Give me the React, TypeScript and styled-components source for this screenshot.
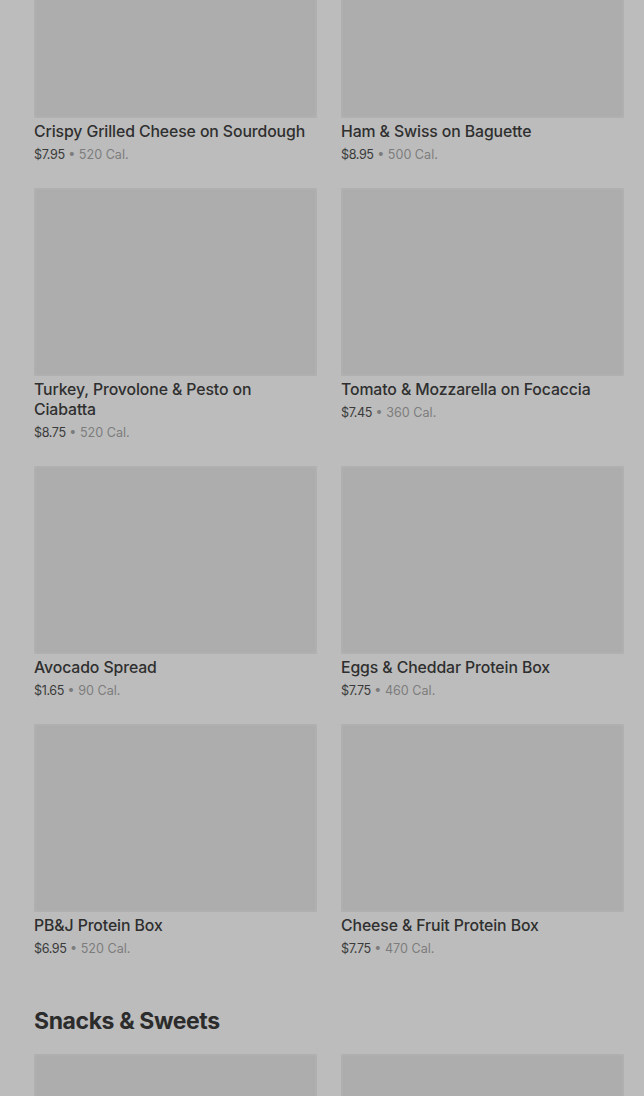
import React from 'react';
import styled, { createGlobalStyle } from 'styled-components';

const GlobalStyle = createGlobalStyle`
  html, body {
    margin: 0;
    padding: 0;
    background: #bcbcbc;
    font-family: Inter, "Noto Sans", "Liberation Sans", sans-serif;
    overflow: hidden;
  }
`;

const Page = styled.div`
  width: 644px;
  height: 1096px;
  overflow: hidden;
  background: #bcbcbc;
`;

const Content = styled.div`
  margin-top: -70px;
  padding: 0 20px 0 34px;
`;

const Section = styled.section`
  display: flex;
  flex-direction: column;
`;

const SectionTitle = styled.h2`
  margin: 0;
  padding: 15px 0 9px 0;
  font-size: 23px;
  line-height: 48px;
  font-weight: 700;
  letter-spacing: -0.4px;
  color: #2c2c2c;
`;

const Grid = styled.div`
  display: grid;
  grid-template-columns: 283px 283px;
  column-gap: 24px;
`;

const Card = styled.div`
  display: flex;
  flex-direction: column;
  padding-bottom: 23px;
`;

const Thumb = styled.div`
  height: 188px;
  background: #adadad;
  box-shadow: inset 0 0 3px 1px rgba(190, 190, 190, 0.35);
`;

const ItemName = styled.div`
  margin-top: 4px;
  font-size: 15.8px;
  line-height: 20px;
  font-weight: 500;
  letter-spacing: -0.1px;
  color: #2f2f2f;
`;

const Meta = styled.div`
  margin-top: 3px;
  font-size: 12.6px;
  line-height: 20px;
  color: #7c7c7c;
`;

const Price = styled.span`
  color: #3a3a3a;
  letter-spacing: -0.4px;
`;

type Item = { name: string; price: string; cal: string };

const sandwiches: Item[] = [
  { name: 'Crispy Grilled Cheese on Sourdough', price: '$7.95', cal: '520 Cal.' },
  { name: 'Ham & Swiss on Baguette', price: '$8.95', cal: '500 Cal.' },
  { name: 'Turkey, Provolone & Pesto on Ciabatta', price: '$8.75', cal: '520 Cal.' },
  { name: 'Tomato & Mozzarella on Focaccia', price: '$7.45', cal: '360 Cal.' },
  { name: 'Avocado Spread', price: '$1.65', cal: '90 Cal.' },
  { name: 'Eggs & Cheddar Protein Box', price: '$7.75', cal: '460 Cal.' },
  { name: 'PB&J Protein Box', price: '$6.95', cal: '520 Cal.' },
  { name: 'Cheese & Fruit Protein Box', price: '$7.75', cal: '470 Cal.' },
];

const snacks: Item[] = [
  { name: '', price: '', cal: '' },
  { name: '', price: '', cal: '' },
];

const MenuCard = ({ name, price, cal }: Item) => (
  <Card>
    <Thumb />
    {name && <ItemName>{name}</ItemName>}
    {price && (
      <Meta>
        <Price>{price}</Price> • {cal}
      </Meta>
    )}
  </Card>
);

const App = () => (
  <Page>
    <GlobalStyle />
    <Content>
      <Section>
        <Grid>
          {sandwiches.map((item, index) => (
            <MenuCard key={index} {...item} />
          ))}
        </Grid>
      </Section>
      <Section>
        <SectionTitle>Snacks &amp; Sweets</SectionTitle>
        <Grid>
          {snacks.map((item, index) => (
            <MenuCard key={index} {...item} />
          ))}
        </Grid>
      </Section>
    </Content>
  </Page>
);

export default App;
